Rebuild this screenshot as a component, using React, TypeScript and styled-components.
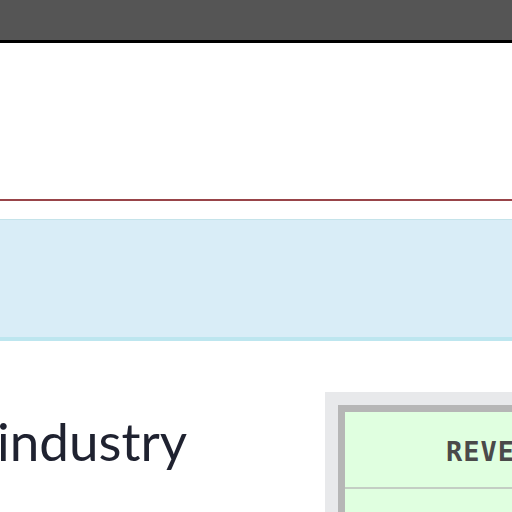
import React from "react";
import styled, { createGlobalStyle } from "styled-components";

const Global = createGlobalStyle`
  html, body { margin: 0; padding: 0; background: #fff; overflow: hidden; }
  body { width: 512px; height: 512px; }
`;

const Page = styled.div`
  width: 512px;
  height: 512px;
  overflow: hidden;
  display: flex;
  flex-direction: column;
`;

const TopBar = styled.div`
  height: 40px;
  flex: none;
  background: #555555;
  border-bottom: 3px solid #000;
`;

const Masthead = styled.div`
  height: 156px;
  flex: none;
  border-bottom: 2px solid #984449;
`;

const Notice = styled.div`
  margin-top: 18px;
  height: 117px;
  flex: none;
  background: #d9edf7;
  border-top: 1px solid #c4e3ea;
  border-bottom: 4px solid #bde6ef;
`;

const Content = styled.div`
  display: flex;
  align-items: flex-start;
  margin-top: 51px;
`;

const Heading = styled.h1`
  margin: 22px 0 0 -3px;
  width: 328px;
  flex: none;
  font-family: Lato, "Noto Sans", sans-serif;
  font-weight: 400;
  font-size: 53px;
  line-height: 54px;
  color: #1f2230;
`;

const TableWrap = styled.div`
  flex: none;
  width: 300px;
  background: #e8e9eb;
  padding: 13px 0 0 13px;
`;

const Table = styled.table`
  width: 100%;
  border-collapse: collapse;
  border: 7px solid #b6b6b6;
  border-right: none;
  background: #e0ffe0;
`;

const HeadCell = styled.th`
  height: 71px;
  padding: 4px 0 0 101px;
  text-align: left;
  border-top: 3px solid #cfcfcf;
  border-bottom: 2px solid #c4cec4;
  font-family: "DejaVu Sans Mono", "Liberation Mono", monospace;
  font-weight: 700;
  font-size: 27px;
  letter-spacing: 1px;
  color: #4a4a4a;
  white-space: nowrap;
  -webkit-font-smoothing: none;
`;

const BodyCell = styled.td`
  height: 40px;
`;

export default function App() {
  return (
    <Page>
      <Global />
      <TopBar />
      <Masthead />
      <Notice />
      <Content>
        <Heading>industry</Heading>
        <TableWrap>
          <Table>
            <thead>
              <tr>
                <HeadCell>REVENUE</HeadCell>
              </tr>
            </thead>
            <tbody>
              <tr>
                <BodyCell />
              </tr>
            </tbody>
          </Table>
        </TableWrap>
      </Content>
    </Page>
  );
}
